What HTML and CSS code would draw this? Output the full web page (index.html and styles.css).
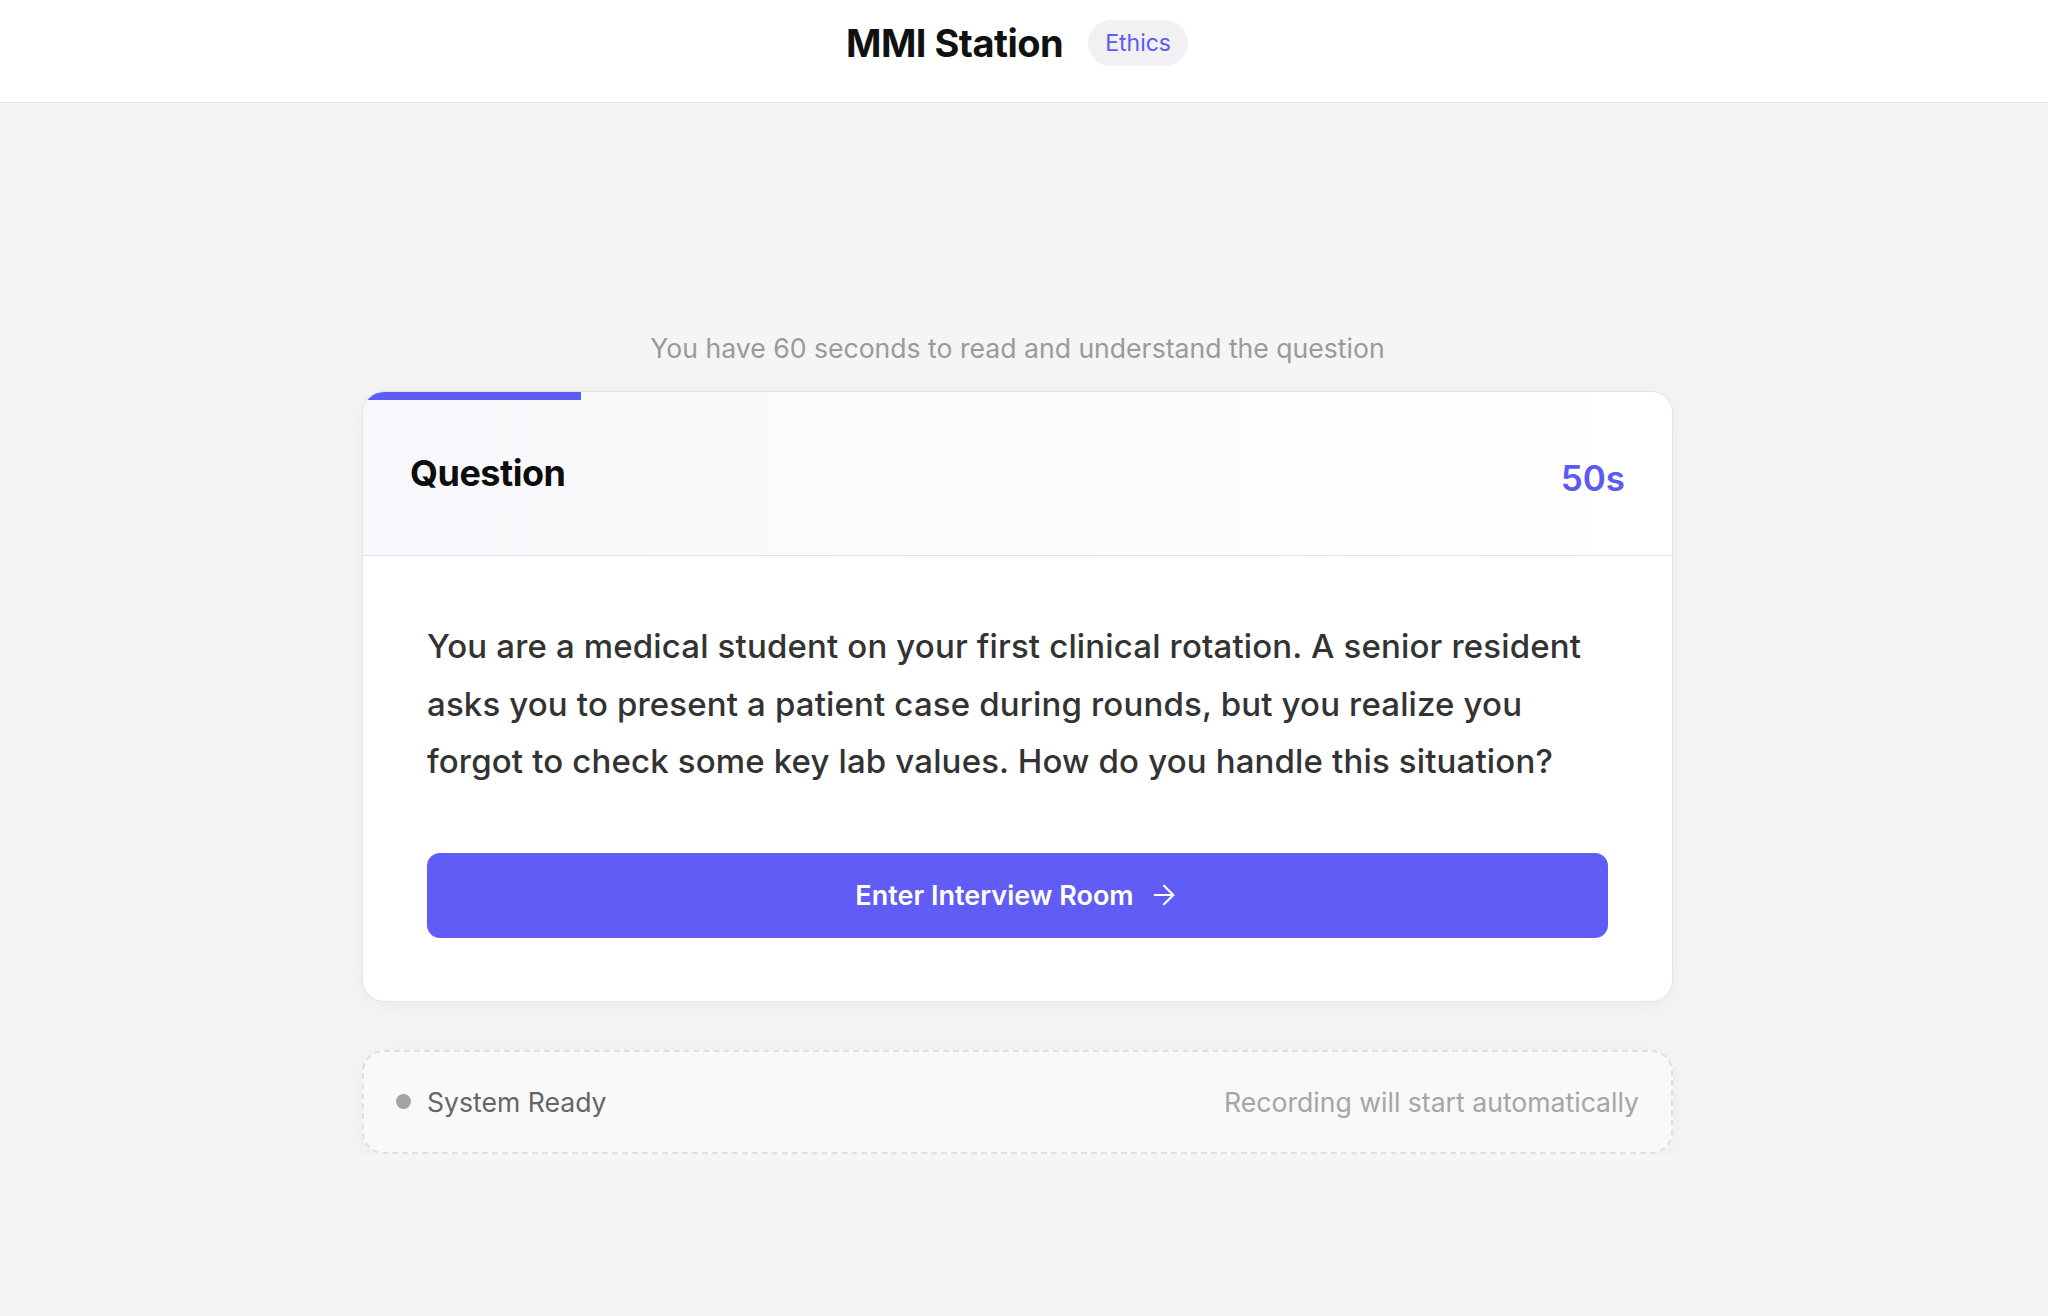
FILE: index.html
```html
<!DOCTYPE html>
<html lang="en">
<head>
    <meta charset="UTF-8">
    <meta name="viewport" content="width=device-width, initial-scale=1.0">
    <title>MMI Station</title>
    <link rel="stylesheet" href="styles.css">
</head>
<body>
    <header class="topbar">
        <h1>MMI Station</h1>
        <span class="tag">Ethics</span>
    </header>

    <main class="stage">
        <p class="hint">You have 60 seconds to read and understand the question</p>

        <section class="card">
            <div class="progress"><div class="progress-fill" style="width: 16.67%"></div></div>
            <div class="card-head">
                <h2>Question</h2>
                <span class="timer">50s</span>
            </div>
            <div class="card-body">
                <p class="question">You are a medical student on your first clinical rotation. A senior resident asks you to present a patient case during rounds, but you realize you forgot to check some key lab values. How do you handle this situation?</p>
                <button class="enter-btn">
                    Enter Interview Room
                    <svg width="32" height="32" viewBox="0 0 24 24" fill="none" stroke="currentColor" stroke-width="1.6" stroke-linecap="round" stroke-linejoin="round"><path d="M5 12h14"/><path d="M12 5l7 7-7 7"/></svg>
                </button>
            </div>
        </section>

        <div class="status">
            <div class="status-left">
                <span class="dot"></span>
                <span>System Ready</span>
            </div>
            <span class="status-note">Recording will start automatically</span>
        </div>
    </main>
</body>
</html>
```

FILE: styles.css
```css
body {
    font-family: Inter, "Noto Sans", sans-serif;
    margin: 0;
    padding: 0;
    background-color: #f5f5f5;
    color: #111;
}
.topbar {
    display: flex;
    align-items: center;
    justify-content: center;
    gap: 25px;
    height: 103px;
    padding: 0 14px 17px 0;
    box-sizing: border-box;
    background-color: #fff;
    border-bottom: 1px solid #e4e4e4;
}
.topbar h1 {
    margin: 0;
    font-size: 38px;
    font-weight: 700;
    letter-spacing: -0.5px;
    color: #111;
}
.tag {
    display: inline-flex;
    align-items: center;
    height: 46px;
    padding: 0 17px;
    border-radius: 23px;
    background-color: #f1f1f4;
    color: #5b5bf0;
    font-size: 23px;
}
.stage {
    display: flex;
    flex-direction: column;
    align-items: center;
    padding: 225px 13px 0 0;
}
.hint {
    margin: 0 0 23px;
    font-size: 26.6px;
    line-height: 40px;
    color: #9a9a9a;
}
.card {
    width: 1311px;
    box-sizing: border-box;
    background-color: #fff;
    border: 1px solid #e4e4e4;
    border-radius: 22px;
    overflow: hidden;
    box-shadow: 0 4px 28px rgba(0, 0, 0, 0.05);
}
.progress {
    height: 8px;
    background: linear-gradient(90deg, #f8f8fc, #fff);
}
.progress-fill {
    height: 100%;
    background-color: #5f5cf6;
}
.card-head {
    display: flex;
    align-items: center;
    justify-content: space-between;
    height: 156px;
    padding: 0 47px;
    box-sizing: border-box;
    background: linear-gradient(90deg, #f8f8fc, #fff);
    border-bottom: 1px solid #e4e4e4;
}
.card-head h2 {
    margin: 0 0 10px;
    font-size: 36px;
    font-weight: 700;
    letter-spacing: -0.5px;
    color: #0d0d0d;
}
.timer {
    font-size: 35px;
    font-weight: 600;
    color: #5b5bf2;
}
.card-body {
    padding: 62px 64px 63px;
}
.question {
    margin: 0 0 62px;
    font-size: 33px;
    font-weight: 500;
    letter-spacing: 0.15px;
    line-height: 57.5px;
    color: #333;
}
.enter-btn {
    display: flex;
    align-items: center;
    justify-content: center;
    gap: 14px;
    width: 100%;
    height: 85px;
    border: none;
    border-radius: 13px;
    background-color: #615cf6;
    color: #fff;
    font-family: inherit;
    font-size: 27px;
    font-weight: 600;
    cursor: pointer;
}
.status {
    display: flex;
    align-items: center;
    justify-content: space-between;
    width: 1311px;
    height: 104px;
    margin-top: 48px;
    padding: 0 32px;
    box-sizing: border-box;
    background-color: #f9f9f9;
    border: 2px dashed #e0e0e0;
    border-radius: 22px;
    box-shadow: 0 4px 28px rgba(0, 0, 0, 0.05);
    font-size: 26.6px;
}
.status-left {
    display: flex;
    align-items: center;
    gap: 16px;
    color: #666;
}
.dot {
    width: 15px;
    height: 15px;
    border-radius: 50%;
    background-color: #a3a3a3;
}
.status-note {
    color: #a5a5a5;
}
```
